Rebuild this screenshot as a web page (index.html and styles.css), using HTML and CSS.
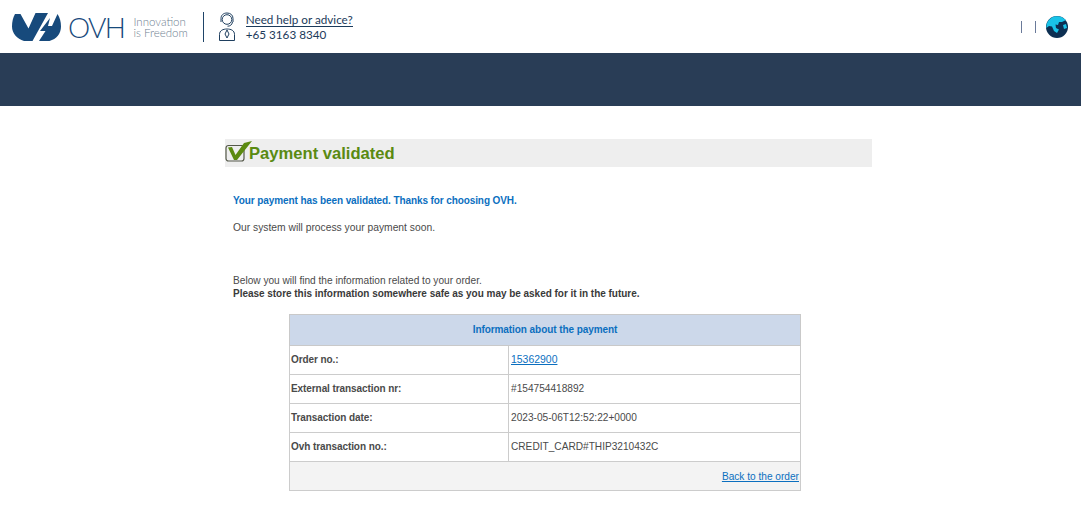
FILE: index.html
```html
<!DOCTYPE html>
<html lang="en">
<head>
<meta charset="utf-8">
<title>Payment validated</title>
<link rel="stylesheet" href="styles.css">
</head>
<body>
<header class="topbar">
  <div class="brand">
    <svg class="logo" viewBox="0 0 50 30" width="50" height="30" aria-hidden="true">
      <path d="M4 2 L9.5 2 L17.5 16.5 L24.5 1 L37 1 L21.5 29 L13 29 C6 27 1 21 1 14.5 C1 9.5 2 5.5 4 2 Z" fill="#174a7c"/>
      <path d="M46.5 2 C48.8 5.5 50 9.5 50 14.5 C50 21.5 45.5 27 38.5 29 L28 29 L34.5 19 L29 19 L39 6 L37 14 L41 14 Z" fill="#174a7c"/>
    </svg>
    <span class="wordmark">OVH</span>
    <span class="tagline">Innovation<br>is Freedom</span>
  </div>
  <span class="divider"></span>
  <svg class="agent" viewBox="0 0 18 30" width="18" height="30" aria-hidden="true" fill="none" stroke="#1f3f5f" stroke-width="1">
    <circle cx="9" cy="7.5" r="4.8"/>
    <path d="M3 10 V6.5 C3 3 5.5 1 9 1 C12.5 1 15 3 15 6.5 V10"/>
    <path d="M14.5 10 C14 13 12 14.2 9.5 14.2"/>
    <path d="M1.5 28.5 V22.5 C1.5 18.5 5 17 9 17 C13 17 16.5 18.5 16.5 22.5 V28.5 Z"/>
    <path d="M9 18 L7 22 L9 26 L11 22 Z"/>
  </svg>
  <div class="help">
    <a class="help-link" href="#">Need help or advice?</a>
    <span class="help-phone">+65 3163 8340</span>
  </div>
  <div class="tools">
    <span class="tick"></span>
    <span class="tick"></span>
    <svg class="globe" viewBox="0 0 22 22" width="22" height="22" aria-hidden="true">
      <circle cx="11" cy="11" r="11" fill="#0d2f52"/>
      <path d="M.6 8 C2 4 5 1.2 9 .3 C11 0 14 .3 16 1.3 L20 4 L16 6 L13 6 L12 9 L9.5 8.5 L10 12 L13 13.5 L11 17 L8 15 L6 10.5 L3 10 L.3 12 Z" fill="#19c3e8"/>
      <path d="M17 9 L20 8 L21 12 L18 13 Z" fill="#19c3e8"/>
    </svg>
  </div>
</header>
<div class="band"></div>
<main class="content">
  <h1 class="title">
    <svg class="check" viewBox="0 0 30 24" width="30" height="24" aria-hidden="true">
      <rect x="1" y="6.5" width="18" height="15.5" rx="2.5" fill="none" stroke="#55594a" stroke-width="1.2"/>
      <path d="M3 8.5 L7 8 L10.5 16 L19 4 L27 2 L12 21 L9 21 Z" fill="#5c8a10"/>
    </svg>
    <span>Payment validated</span>
  </h1>
  <p class="lead">Your payment has been validated. Thanks for choosing OVH.</p>
  <p class="note">Our system will process your payment soon.</p>
  <p class="info">Below you will find the information related to your order.<br><strong>Please store this information somewhere safe as you may be asked for it in the future.</strong></p>
  <table class="pay">
    <thead>
      <tr><th colspan="2">Information about the payment</th></tr>
    </thead>
    <tbody>
      <tr><td class="key">Order no.:</td><td><a href="#">15362900</a></td></tr>
      <tr><td class="key">External transaction nr:</td><td>#154754418892</td></tr>
      <tr><td class="key">Transaction date:</td><td>2023-05-06T12:52:22+0000</td></tr>
      <tr><td class="key">Ovh transaction no.:</td><td>CREDIT_CARD#THIP3210432C</td></tr>
    </tbody>
    <tfoot>
      <tr><td colspan="2"><a href="#">Back to the order</a></td></tr>
    </tfoot>
  </table>
</main>
</body>
</html>
```
FILE: styles.css
```css
* { box-sizing: border-box; }
html, body { margin: 0; padding: 0; }
body { background: #fff; font-family: "Liberation Sans", Arial, sans-serif; font-size: 10px; color: #4a4a4a; width: 1081px; height: 515px; overflow: hidden; }
.topbar { height: 53px; display: flex; align-items: center; padding: 0 13px 0 11px; background: #fff; }
.brand { display: flex; align-items: center; }
.logo { display: block; flex: none; }
.wordmark { font-family: Lato, sans-serif; font-weight: 300; font-size: 28px; color: #174a7c; margin-left: 7px; letter-spacing: -1.6px; line-height: 1; }
.tagline { font-family: Lato, sans-serif; font-weight: 300; font-size: 11.5px; line-height: 11px; color: #6f7f92; margin-left: 9px; }
.divider { width: 1px; height: 30px; background: #1f4468; margin-left: 15px; }
.agent { display: block; flex: none; margin-left: 14px; }
.help { display: flex; flex-direction: column; margin-left: 10px; font-family: Lato, sans-serif; font-size: 11.7px; line-height: 14px; color: #1b3a5a; }
.help-link { color: #1b3a5a; text-decoration: none; border-bottom: 1px solid #1b3a5a; }
.tools { margin-left: auto; display: flex; align-items: center; gap: 13px; }
.tick { width: 1px; height: 12px; background: #6a7a9a; }
.globe { display: block; margin-left: -3px; flex: none; }
.band { height: 53px; background: #293d56; }
.content { width: 647px; margin-left: 225px; padding-top: 33px; }
.title { display: flex; align-items: center; height: 28px; background: #eeeeee; margin: 0; color: #5a8a12; font-size: 16.6px; font-weight: bold; }
.title span { margin-left: -6px; margin-top: 2px; }
.check { display: block; margin-top: -5px; flex: none; }
.content p { margin: 0; padding-left: 8px; line-height: 13px; }
.lead { color: #0b6fbf; font-weight: bold; letter-spacing: -.1px; margin-top: 27px !important; }
.note { font-size: 10.3px; margin-top: 14px !important; }
.info { margin-top: 40px !important; font-size: 10.15px; }
.info strong { font-size: 10px; letter-spacing: -.03px; color: #3a3a3a; }
.pay { width: 512px; margin: 14px 0 0 64px; border-collapse: collapse; font-size: 10.15px; }
.pay th { height: 31px; background: #ccd8ea; color: #0b6fbf; font-weight: bold; font-size: 10px; letter-spacing: -.07px; border: 1px solid #c9c9c9; padding: 0 0 2px; }
.pay td { height: 29px; border: 1px solid #cccccc; padding: 0 2px 2px; }
.pay .key { width: 219px; font-weight: bold; font-size: 10px; letter-spacing: -.08px; color: #4a4a4a; padding-left: 1px; }
.pay a { color: #0b6fbf; }
.pay tbody a { font-size: 10.45px; }
.pay tfoot td { background: #f3f3f3; text-align: right; height: 29px; padding: 0 1px 0 0; }
```
